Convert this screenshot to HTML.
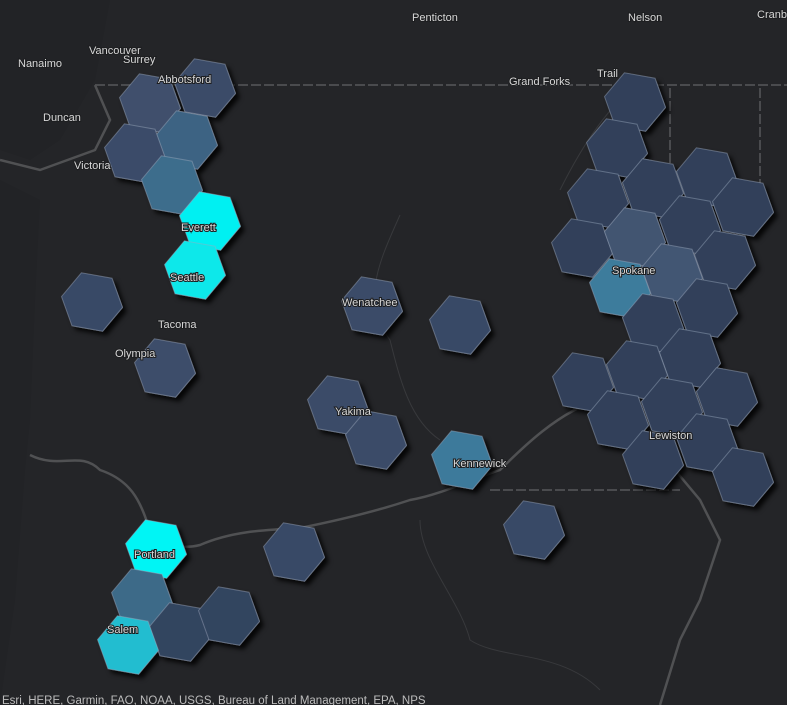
<!DOCTYPE html>
<html><head><meta charset="utf-8"><style>
html,body{margin:0;padding:0;background:#232427;overflow:hidden}
svg{display:block}
text{font-family:"Liberation Sans",sans-serif;font-size:11px;fill:#d8d8d8}
.ml{fill:#c8c8c8;paint-order:stroke;stroke:#1d1e20;stroke-width:2px}
</style></head><body>
<svg width="787" height="705" viewBox="0 0 787 705" xmlns="http://www.w3.org/2000/svg">
<defs>
<filter id="sh" x="-30%" y="-30%" width="170%" height="170%"><feDropShadow dx="4" dy="4" stdDeviation="2.5" flood-color="#000" flood-opacity="0.85"/></filter>
<path id="h" d="M30.5,5.4 L10.6,29.2 L-20,23.8 L-30.5,-5.4 L-10.6,-29.2 L20,-23.8 Z" stroke="rgba(160,170,190,0.45)" stroke-width="1"/>
</defs>
<rect width="787" height="705" fill="#242528"/>
<path d="M0,0 L110,0 L95,80 L60,140 L30,160 L0,150 Z" fill="#222326"/>
<path d="M0,180 L40,200 L35,300 L30,420 L25,470 L15,600 L0,705 Z" fill="#222326"/>
<g fill="none" stroke="#4a4b4e" stroke-width="2" stroke-dasharray="10 3">
<path d="M95,85 L787,85"/><path d="M670,88 L670,480"/><path d="M760,88 L760,230"/><path d="M490,490 L680,490"/>
</g>
<g fill="none" stroke="#505153" stroke-width="2.5">
<path d="M30,455 C60,470 80,450 100,470 C130,480 140,500 148,525 C160,545 180,550 200,545 C230,532 260,530 300,528 C340,520 380,510 410,500 C440,495 470,480 500,470 C520,450 560,410 600,400"/>
<path d="M0,160 L40,170 L95,150 L110,120 L95,85"/>
<path d="M675,470 L700,500 L720,540 L700,600 L680,640 L660,705"/>
</g>
<g fill="none" stroke="#38393c" stroke-width="1">
<path d="M400,215 C380,260 360,300 390,340 C400,380 410,420 440,440"/>
<path d="M560,190 C580,150 600,120 620,100"/>
<path d="M420,520 C420,560 460,600 470,640 C500,660 560,650 600,690"/>
</g>
<g filter="url(#sh)">
<use href="#h" x="205" y="88" fill="#3a4b68"/>
<use href="#h" x="150" y="103" fill="#3f506c"/>
<use href="#h" x="187" y="140" fill="#3e6483"/>
<use href="#h" x="135" y="153" fill="#3b4c69"/>
<use href="#h" x="172" y="185" fill="#3c6d8c"/>
<use href="#h" x="210" y="221" fill="#00f0f2"/>
<use href="#h" x="195" y="270" fill="#0ee8ea"/>
<use href="#h" x="92" y="302" fill="#384966"/>
<use href="#h" x="165" y="368" fill="#3d4d6a"/>
<use href="#h" x="372" y="306" fill="#3b4c68"/>
<use href="#h" x="460" y="325" fill="#384966"/>
<use href="#h" x="338" y="405" fill="#3b4c68"/>
<use href="#h" x="376" y="440" fill="#3b4c68"/>
<use href="#h" x="462" y="460" fill="#3c7a9b"/>
<use href="#h" x="534" y="530" fill="#384966"/>
<use href="#h" x="294" y="552" fill="#384966"/>
<use href="#h" x="156" y="549" fill="#00f5f5"/>
<use href="#h" x="142" y="598" fill="#3e6a88"/>
<use href="#h" x="180" y="632" fill="#33445f"/>
<use href="#h" x="229" y="616" fill="#33445f"/>
<use href="#h" x="128" y="645" fill="#23bdd0"/>
<use href="#h" x="635" y="102" fill="#30405a"/>
<use href="#h" x="617" y="148" fill="#30405a"/>
<use href="#h" x="598" y="198" fill="#30405a"/>
<use href="#h" x="582" y="248" fill="#30405a"/>
<use href="#h" x="653" y="188" fill="#30405a"/>
<use href="#h" x="707" y="177" fill="#30405a"/>
<use href="#h" x="743" y="207" fill="#30405a"/>
<use href="#h" x="635" y="237" fill="#425571"/>
<use href="#h" x="690" y="225" fill="#30405a"/>
<use href="#h" x="672" y="273" fill="#435673"/>
<use href="#h" x="725" y="260" fill="#30405a"/>
<use href="#h" x="620" y="288" fill="#3c7b9c"/>
<use href="#h" x="653" y="323" fill="#30405a"/>
<use href="#h" x="707" y="308" fill="#30405a"/>
<use href="#h" x="690" y="358" fill="#30405a"/>
<use href="#h" x="583" y="382" fill="#30405a"/>
<use href="#h" x="637" y="370" fill="#30405a"/>
<use href="#h" x="727" y="397" fill="#30405a"/>
<use href="#h" x="672" y="407" fill="#30405a"/>
<use href="#h" x="618" y="420" fill="#30405a"/>
<use href="#h" x="653" y="460" fill="#30405a"/>
<use href="#h" x="707" y="443" fill="#30405a"/>
<use href="#h" x="743" y="477" fill="#30405a"/>
</g>
<g class="ml">
<text x="412" y="21">Penticton</text>
<text x="628" y="21">Nelson</text>
<text x="757" y="18">Cranb</text>
<text x="89" y="54">Vancouver</text>
<text x="123" y="63">Surrey</text>
<text x="18" y="67">Nanaimo</text>
<text x="158" y="83">Abbotsford</text>
<text x="509" y="85">Grand Forks</text>
<text x="597" y="77">Trail</text>
<text x="43" y="121">Duncan</text>
<text x="74" y="169">Victoria</text>
<text x="181" y="231">Everett</text>
<text x="170" y="281">Seattle</text>
<text x="342" y="306">Wenatchee</text>
<text x="158" y="328">Tacoma</text>
<text x="115" y="357">Olympia</text>
<text x="335" y="415">Yakima</text>
<text x="453" y="467">Kennewick</text>
<text x="612" y="274">Spokane</text>
<text x="649" y="439">Lewiston</text>
<text x="134" y="558">Portland</text>
<text x="107" y="633">Salem</text>
</g>
<text x="2" y="704" style="font-size:11.5px;fill:#bdbdbd">Esri, HERE, Garmin, FAO, NOAA, USGS, Bureau of Land Management, EPA, NPS</text>
</svg>
</body></html>
